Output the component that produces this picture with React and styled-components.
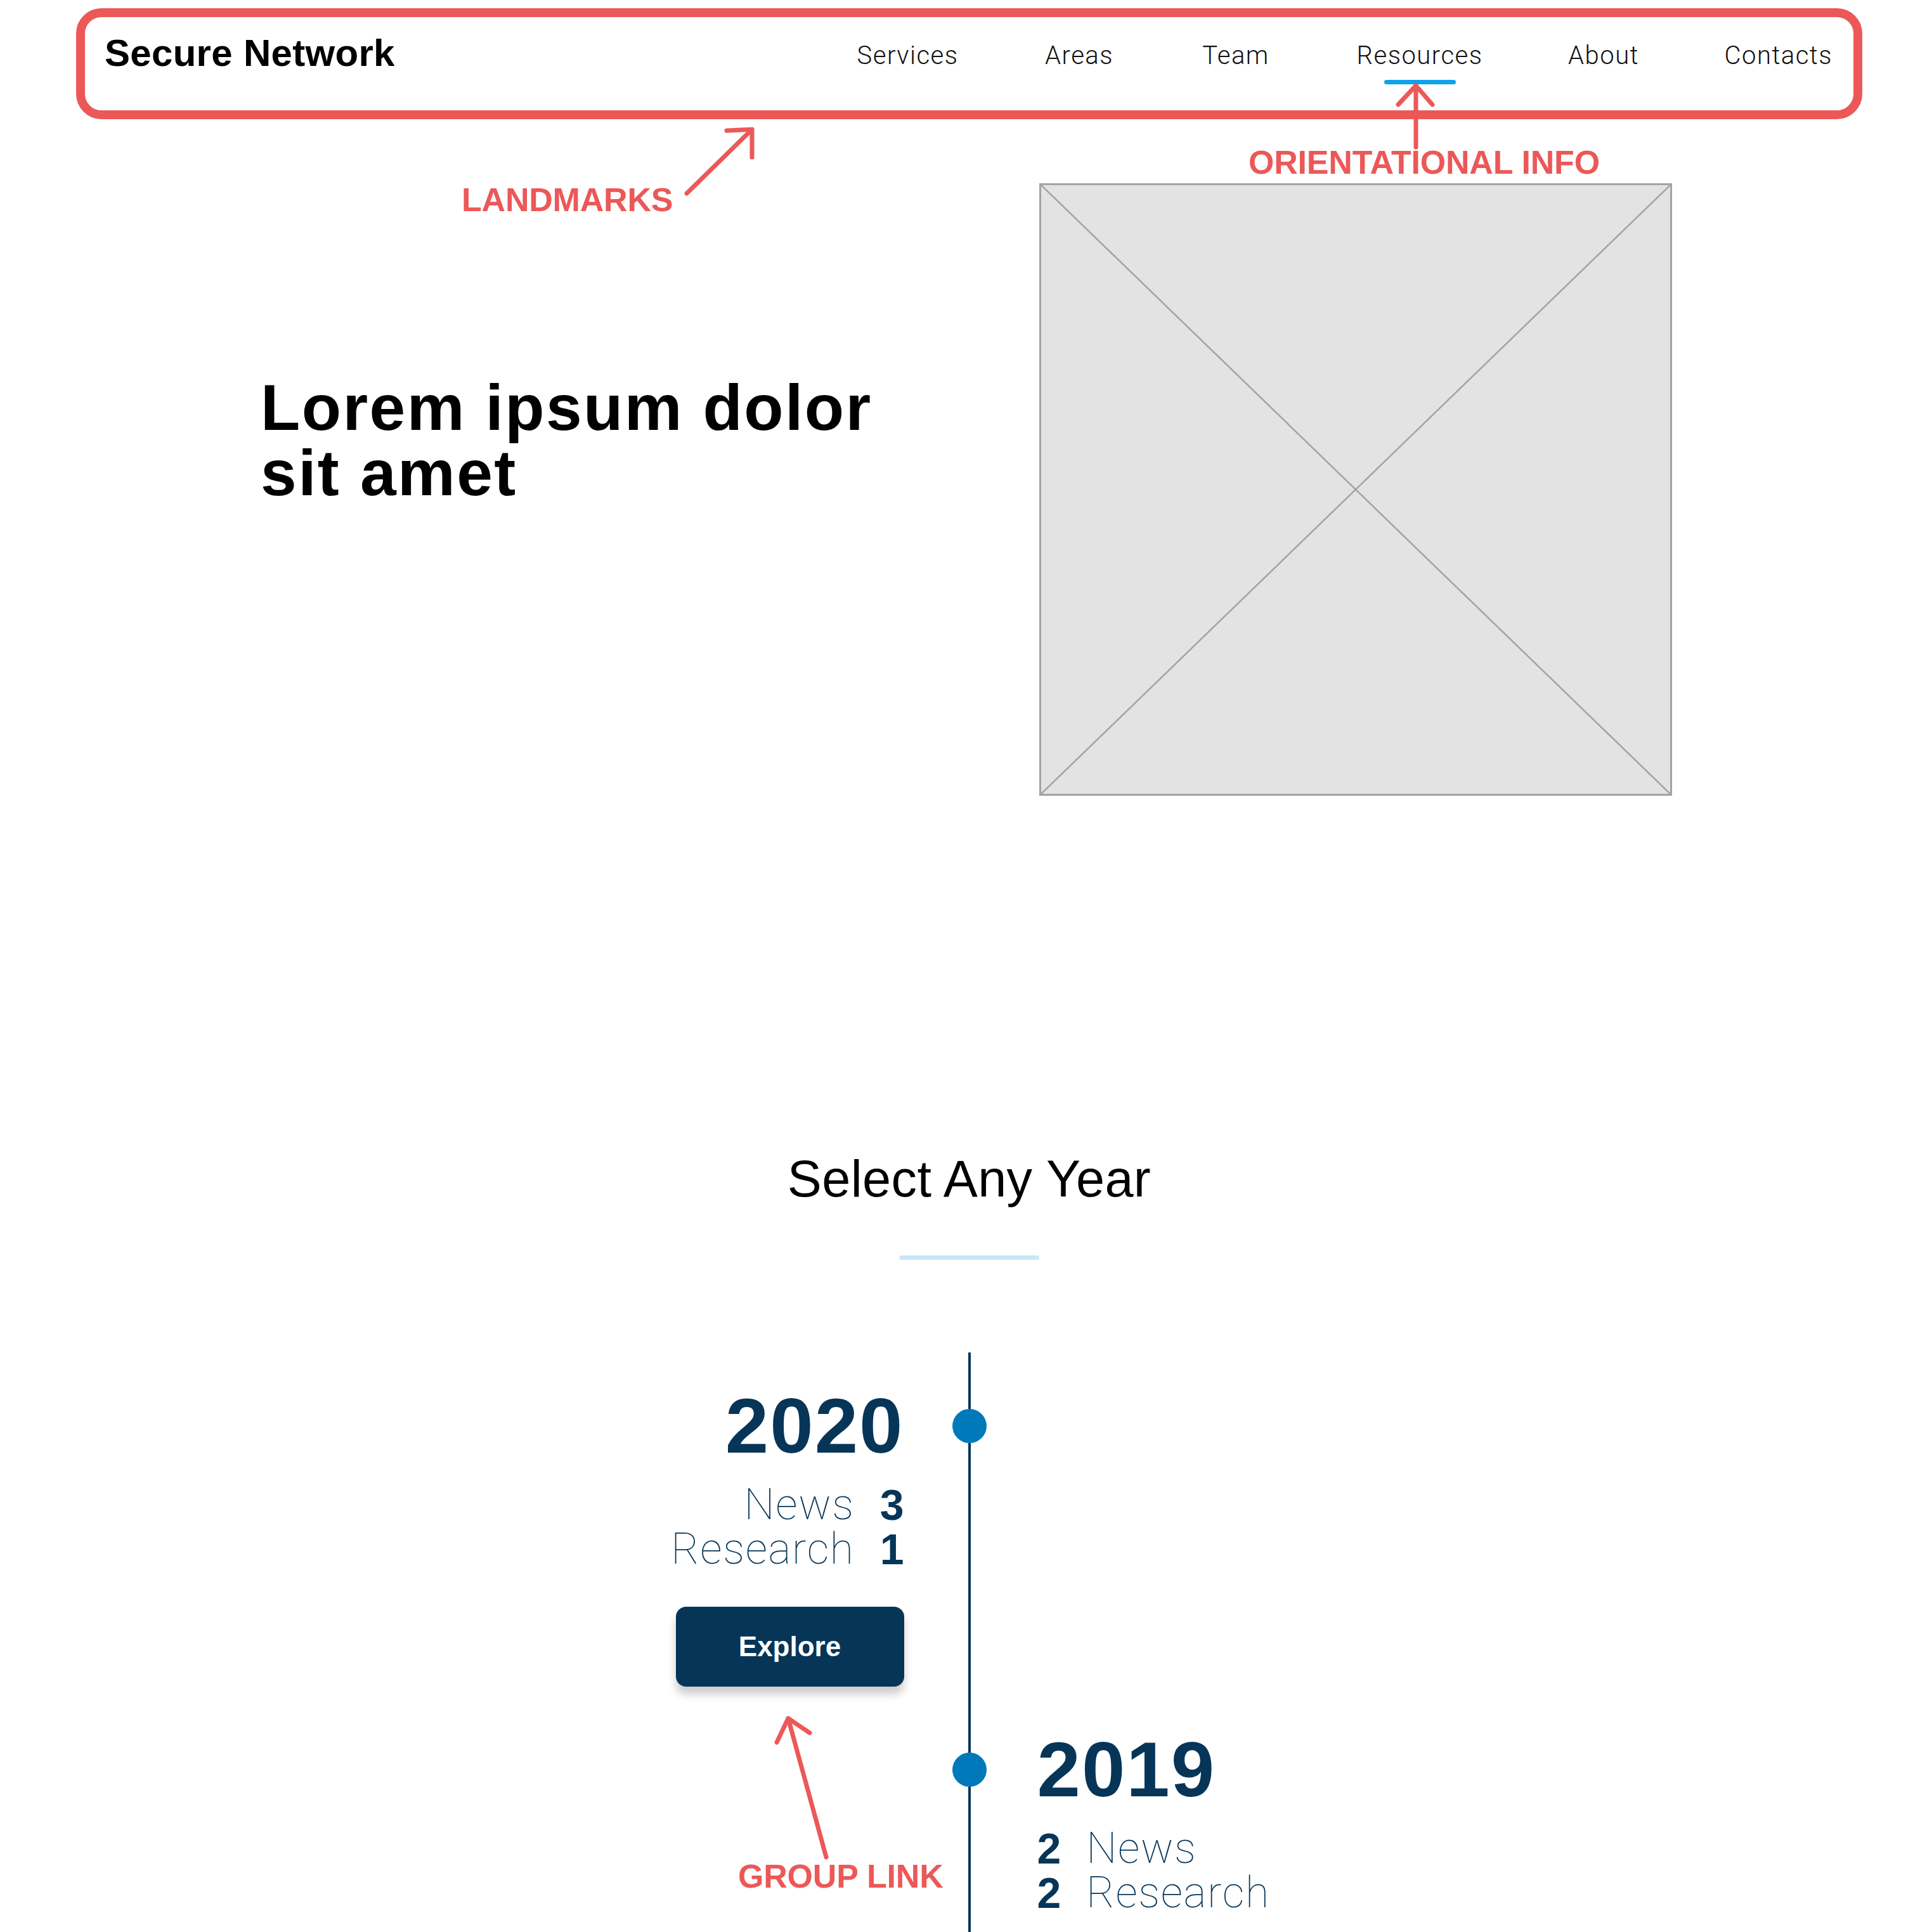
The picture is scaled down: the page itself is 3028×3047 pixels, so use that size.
import React from "react";
import styled, { createGlobalStyle } from "styled-components";

const RED = "#EC5858";
const NAVY = "#063558";
const DOT = "#0079BA";

const GlobalStyle = createGlobalStyle`
  html, body {
    margin: 0;
    padding: 0;
    background: #fff;
  }
  body {
    font-family: "Liberation Sans", Arial, sans-serif;
    color: #000;
  }
  * { box-sizing: border-box; }
`;

const Page = styled.div`
  position: relative;
  width: 3028px;
  height: 3047px;
  overflow: hidden;
  background: #fff;
`;

const Main = styled.main`
  width: 2817px;
  margin-left: 120px;
  padding-top: 13px;
`;

/* header */

const Header = styled.header`
  display: flex;
  justify-content: space-between;
  align-items: flex-start;
  height: 175px;
  padding: 27px 33px 0 31px;
  border: 14px solid ${RED};
  border-radius: 40px;
`;

const Brand = styled.div`
  font-size: 60px;
  line-height: 1;
  font-weight: 700;
  letter-spacing: 0.3px;
`;

const Nav = styled.nav`
  display: flex;
  gap: 134px;
  padding-top: 14px;
`;

const NavItem = styled.a`
  display: flex;
  flex-direction: column;
  align-items: center;
  font-family: Roboto, "Liberation Sans", sans-serif;
  font-weight: 300;
  font-size: 40px;
  line-height: 1;
  letter-spacing: 1.5px;
  color: #111;
  text-decoration: none;

  &::after {
    content: "";
    width: 113px;
    height: 7px;
    margin-top: 18px;
    border-radius: 4px;
    background: ${(p) => (p.$active ? "#0EA2EC" : "transparent")};
  }
`;

/* hero */

const Hero = styled.section`
  display: grid;
  grid-template-columns: 1fr 998px;
  margin-top: 101px;
  padding: 0 300px 0 291px;
`;

const HeroTitle = styled.h1`
  margin: 303px 0 0;
  max-width: 1040px;
  font-size: 102px;
  line-height: 103px;
  font-weight: 700;
  letter-spacing: 2.4px;
`;

const Placeholder = styled.div`
  width: 998px;
  height: 966px;
  background: #e3e3e3;
  border: 3px solid #a3a3a3;

  svg {
    display: block;
    width: 100%;
    height: 100%;
  }
`;

/* years */

const Years = styled.section`
  margin-top: 564px;
  display: flex;
  flex-direction: column;
  align-items: center;
`;

const SectionTitle = styled.h2`
  margin: 0;
  font-size: 81px;
  line-height: 1;
  font-weight: 400;
  letter-spacing: 0.4px;
`;

const Divider = styled.div`
  width: 221px;
  height: 7px;
  margin-top: 80px;
  border-radius: 4px;
  background: #c6e8f8;
`;

const Timeline = styled.div`
  width: 100%;
  margin-top: 146px;
  display: grid;
  grid-template-columns: 1fr 206px 1fr;
`;

const Side = styled.div`
  display: flex;
  flex-direction: column;
  align-items: ${(p) => (p.$left ? "flex-end" : "flex-start")};
  padding-top: ${(p) => p.$gap}px;
  padding-left: ${(p) => (p.$left ? 0 : 4)}px;
  padding-bottom: ${(p) => (p.$last ? 80 : 0)}px;
  color: ${NAVY};
`;

const Axis = styled.div`
  display: flex;
  justify-content: center;
  padding-top: ${(p) => p.$gap}px;
  background: linear-gradient(
    to right,
    transparent calc(50% - 2px),
    ${NAVY} calc(50% - 2px),
    ${NAVY} calc(50% + 2px),
    transparent calc(50% + 2px)
  );
`;

const Dot = styled.span`
  width: 54px;
  height: 54px;
  margin-top: 35px;
  border-radius: 50%;
  background: ${DOT};
`;

const Year = styled.div`
  font-size: 123px;
  line-height: 1;
  font-weight: 700;
  letter-spacing: 2px;
`;

const Stats = styled.div`
  display: grid;
  grid-template-columns: auto auto;
  grid-auto-rows: 70px;
  justify-content: ${(p) => (p.$left ? "end" : "start")};
  column-gap: 40px;
  margin-top: 28px;
  font-size: 68px;
  line-height: 70px;
`;

const Label = styled.span`
  font-family: Roboto, "Liberation Sans", sans-serif;
  font-weight: 100;
  letter-spacing: 1.6px;
  text-align: ${(p) => (p.$left ? "right" : "left")};
`;

const Count = styled.span`
  font-weight: 700;
  text-align: right;
`;

const ExploreButton = styled.button`
  width: 360px;
  height: 126px;
  margin-top: 56px;
  border: 0;
  border-radius: 16px;
  background: ${NAVY};
  color: #fff;
  font-family: "Liberation Sans", Arial, sans-serif;
  font-size: 44px;
  font-weight: 700;
  box-shadow: 0 12px 14px rgba(0, 0, 0, 0.2);
`;

/* annotations */

const ArrowLayer = styled.svg`
  position: absolute;
  inset: 0;
  pointer-events: none;
`;

const Note = styled.div`
  position: absolute;
  top: ${(p) => p.$top}px;
  left: ${(p) => p.$left}px;
  font-size: 52px;
  line-height: 1;
  font-weight: 700;
  letter-spacing: -0.2px;
  color: ${RED};
  white-space: nowrap;
`;

const links = ["Services", "Areas", "Team", "Resources", "About", "Contacts"];

const years = [
  { year: "2020", side: "left", gap: 54, news: 3, research: 1, explore: true },
  { year: "2019", side: "right", gap: 69, news: 2, research: 2, last: true },
];

function Entry({ item }) {
  const left = item.side === "left";
  const content = (
    <Side $left={left} $gap={item.gap} $last={item.last}>
      <Year>{item.year}</Year>
      <Stats $left={left}>
        {left ? (
          <>
            <Label $left>News</Label>
            <Count>{item.news}</Count>
            <Label $left>Research</Label>
            <Count>{item.research}</Count>
          </>
        ) : (
          <>
            <Count>{item.news}</Count>
            <Label>News</Label>
            <Count>{item.research}</Count>
            <Label>Research</Label>
          </>
        )}
      </Stats>
      {item.explore && <ExploreButton>Explore</ExploreButton>}
    </Side>
  );
  const empty = <Side $left={!left} $gap={item.gap} />;
  return (
    <>
      {left ? content : empty}
      <Axis $gap={item.gap}>
        <Dot />
      </Axis>
      {left ? empty : content}
    </>
  );
}

export default function App() {
  return (
    <>
      <GlobalStyle />
      <Page>
        <Main>
          <Header>
            <Brand>Secure Network</Brand>
            <Nav>
              {links.map((l) => (
                <NavItem key={l} href="#" $active={l === "Resources"}>
                  {l}
                </NavItem>
              ))}
            </Nav>
          </Header>

          <Hero>
            <HeroTitle>Lorem ipsum dolor sit amet</HeroTitle>
            <Placeholder>
              <svg viewBox="0 0 100 100" preserveAspectRatio="none">
                <line x1="0" y1="0" x2="100" y2="100" stroke="#a3a3a3" strokeWidth="2.5" vectorEffect="non-scaling-stroke" />
                <line x1="100" y1="0" x2="0" y2="100" stroke="#a3a3a3" strokeWidth="2.5" vectorEffect="non-scaling-stroke" />
              </svg>
            </Placeholder>
          </Hero>

          <Years>
            <SectionTitle>Select Any Year</SectionTitle>
            <Divider />
            <Timeline>
              {years.map((y) => (
                <Entry key={y.year} item={y} />
              ))}
            </Timeline>
          </Years>
        </Main>

        <ArrowLayer width="3028" height="3047" viewBox="0 0 3028 3047">
          <g fill="none" stroke={RED} strokeWidth="7" strokeLinecap="round" strokeLinejoin="round">
            <path d="M1083 305 L1186 204 M1146 206 L1186 204 L1186 248" />
            <path d="M2233 232 L2233 135 M2205 165 L2233 135 L2259 165" />
            <path d="M1303 2929 L1243 2710 M1277 2733 L1243 2710 L1225 2748" />
          </g>
        </ArrowLayer>
        <Note $top={289} $left={728}>LANDMARKS</Note>
        <Note $top={230} $left={1969}>ORIENTATIONAL INFO</Note>
        <Note $top={2933} $left={1164}>GROUP LINK</Note>
      </Page>
    </>
  );
}
